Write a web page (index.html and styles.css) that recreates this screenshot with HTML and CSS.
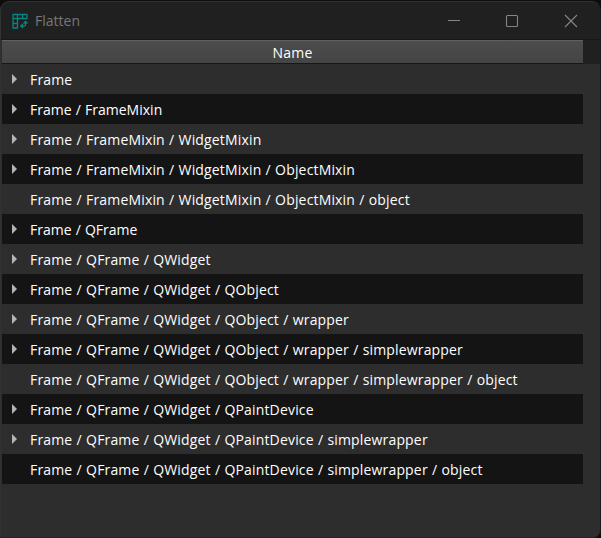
FILE: index.html
```html
<!DOCTYPE html>
<html lang="en">
<head>
<meta charset="utf-8">
<title>Flatten</title>
<link rel="stylesheet" href="styles.css">
</head>
<body>
<main class="window">
  <header class="titlebar">
    <svg class="logo" viewBox="0 0 16 16"><path d="M1 1.500h14v4H1zM1 5.500v9.500h4.500V1.500M1 10.500h4.500M10.500 1.500v4"/><path d="M9 13h3q1.500 0 1.500-1.500V9M10.800 11l-2 2 2 2M11.500 10.500l2-2 2 2"/></svg>
    <h1 class="title">Flatten</h1>
    <div class="controls">
      <svg viewBox="0 0 14 14"><path d="M2 6.500h12"/></svg>
      <svg viewBox="0 0 14 14"><rect x="1.500" y="1.500" width="11" height="11" rx="1"/></svg>
      <svg viewBox="0 0 14 14"><path d="M1 1l12 12M13 1L1 13"/></svg>
    </div>
  </header>
  <section class="tree">
    <div class="column-header">Name</div>
    <ul class="rows">
      <li class="branch"><span>Frame</span></li>
      <li class="branch short"><span>Frame / FrameMixin</span></li>
      <li class="branch"><span>Frame / FrameMixin / WidgetMixin</span></li>
      <li class="branch"><span>Frame / FrameMixin / WidgetMixin / ObjectMixin</span></li>
      <li><span>Frame / FrameMixin / WidgetMixin / ObjectMixin / object</span></li>
      <li class="branch short"><span>Frame / QFrame</span></li>
      <li class="branch"><span>Frame / QFrame / QWidget</span></li>
      <li class="branch"><span>Frame / QFrame / QWidget / QObject</span></li>
      <li class="branch"><span>Frame / QFrame / QWidget / QObject / wrapper</span></li>
      <li class="branch"><span>Frame / QFrame / QWidget / QObject / wrapper / simplewrapper</span></li>
      <li><span>Frame / QFrame / QWidget / QObject / wrapper / simplewrapper / object</span></li>
      <li class="branch"><span>Frame / QFrame / QWidget / QPaintDevice</span></li>
      <li class="branch"><span>Frame / QFrame / QWidget / QPaintDevice / simplewrapper</span></li>
      <li><span>Frame / QFrame / QWidget / QPaintDevice / simplewrapper / object</span></li>
    </ul>
  </section>
</main>
</body>
</html>
```
FILE: styles.css
```css
* { box-sizing: border-box; }
body {
  margin: 0;
  height: 538px;
  padding-top: 1px;
  overflow: hidden;
  background: #0c0c0c;
  font-family: "Open Sans", "Noto Sans", sans-serif;
  font-size: 14px;
  color: #fff;
}
.window {
  height: 537px;
  border: 1px solid #323232;
  border-right-color: #1a1a1a;
  border-bottom-color: #242424;
  border-radius: 9px 9px 8px 0;
  background: #2d2d2d;
  overflow: hidden;
}
.titlebar {
  display: flex;
  align-items: center;
  height: 38px;
  padding: 0 22px 0 11px;
  background: #202020;
  border-bottom: 1px solid #181818;
}
.logo {
  width: 16px;
  height: 16px;
  fill: none;
  stroke: #078583;
  stroke-width: 1.3;
}
.title {
  margin: 0 0 0 7px;
  font-size: 14px;
  font-weight: 400;
  color: #777;
}
.controls { display: flex; gap: 45px; margin-left: auto; }
.controls svg {
  width: 14px;
  height: 14px;
  fill: none;
  stroke: #858585;
  stroke-width: 1.1;
}
.tree { margin-left: 1px; }
.column-header {
  height: 24px;
  margin-right: 17px;
  border-top: 1px solid #606060;
  border-bottom: 1px solid #171717;
  background: linear-gradient(#4c4c4c, #454545);
  box-shadow: 17px 0 #202020;
  line-height: 24px;
  text-align: center;
  letter-spacing: 0.2px;
}
.rows { width: 581px; margin: 0; padding: 0; list-style: none; }
.rows li {
  display: flex;
  align-items: center;
  height: 30px;
  padding-left: 28px;
  letter-spacing: 0.165px;
  word-spacing: 0.4px;
  white-space: pre;
}
.rows .short { letter-spacing: 0.02px; }
.rows li:nth-child(even) { background: #141414; }
.rows .branch { padding-left: 10px; }
.branch::before {
  content: "";
  width: 5px;
  height: 10px;
  margin-right: 13px;
  background: #b5b5b5;
  clip-path: polygon(0 0, 100% 50%, 0 100%);
}
```
